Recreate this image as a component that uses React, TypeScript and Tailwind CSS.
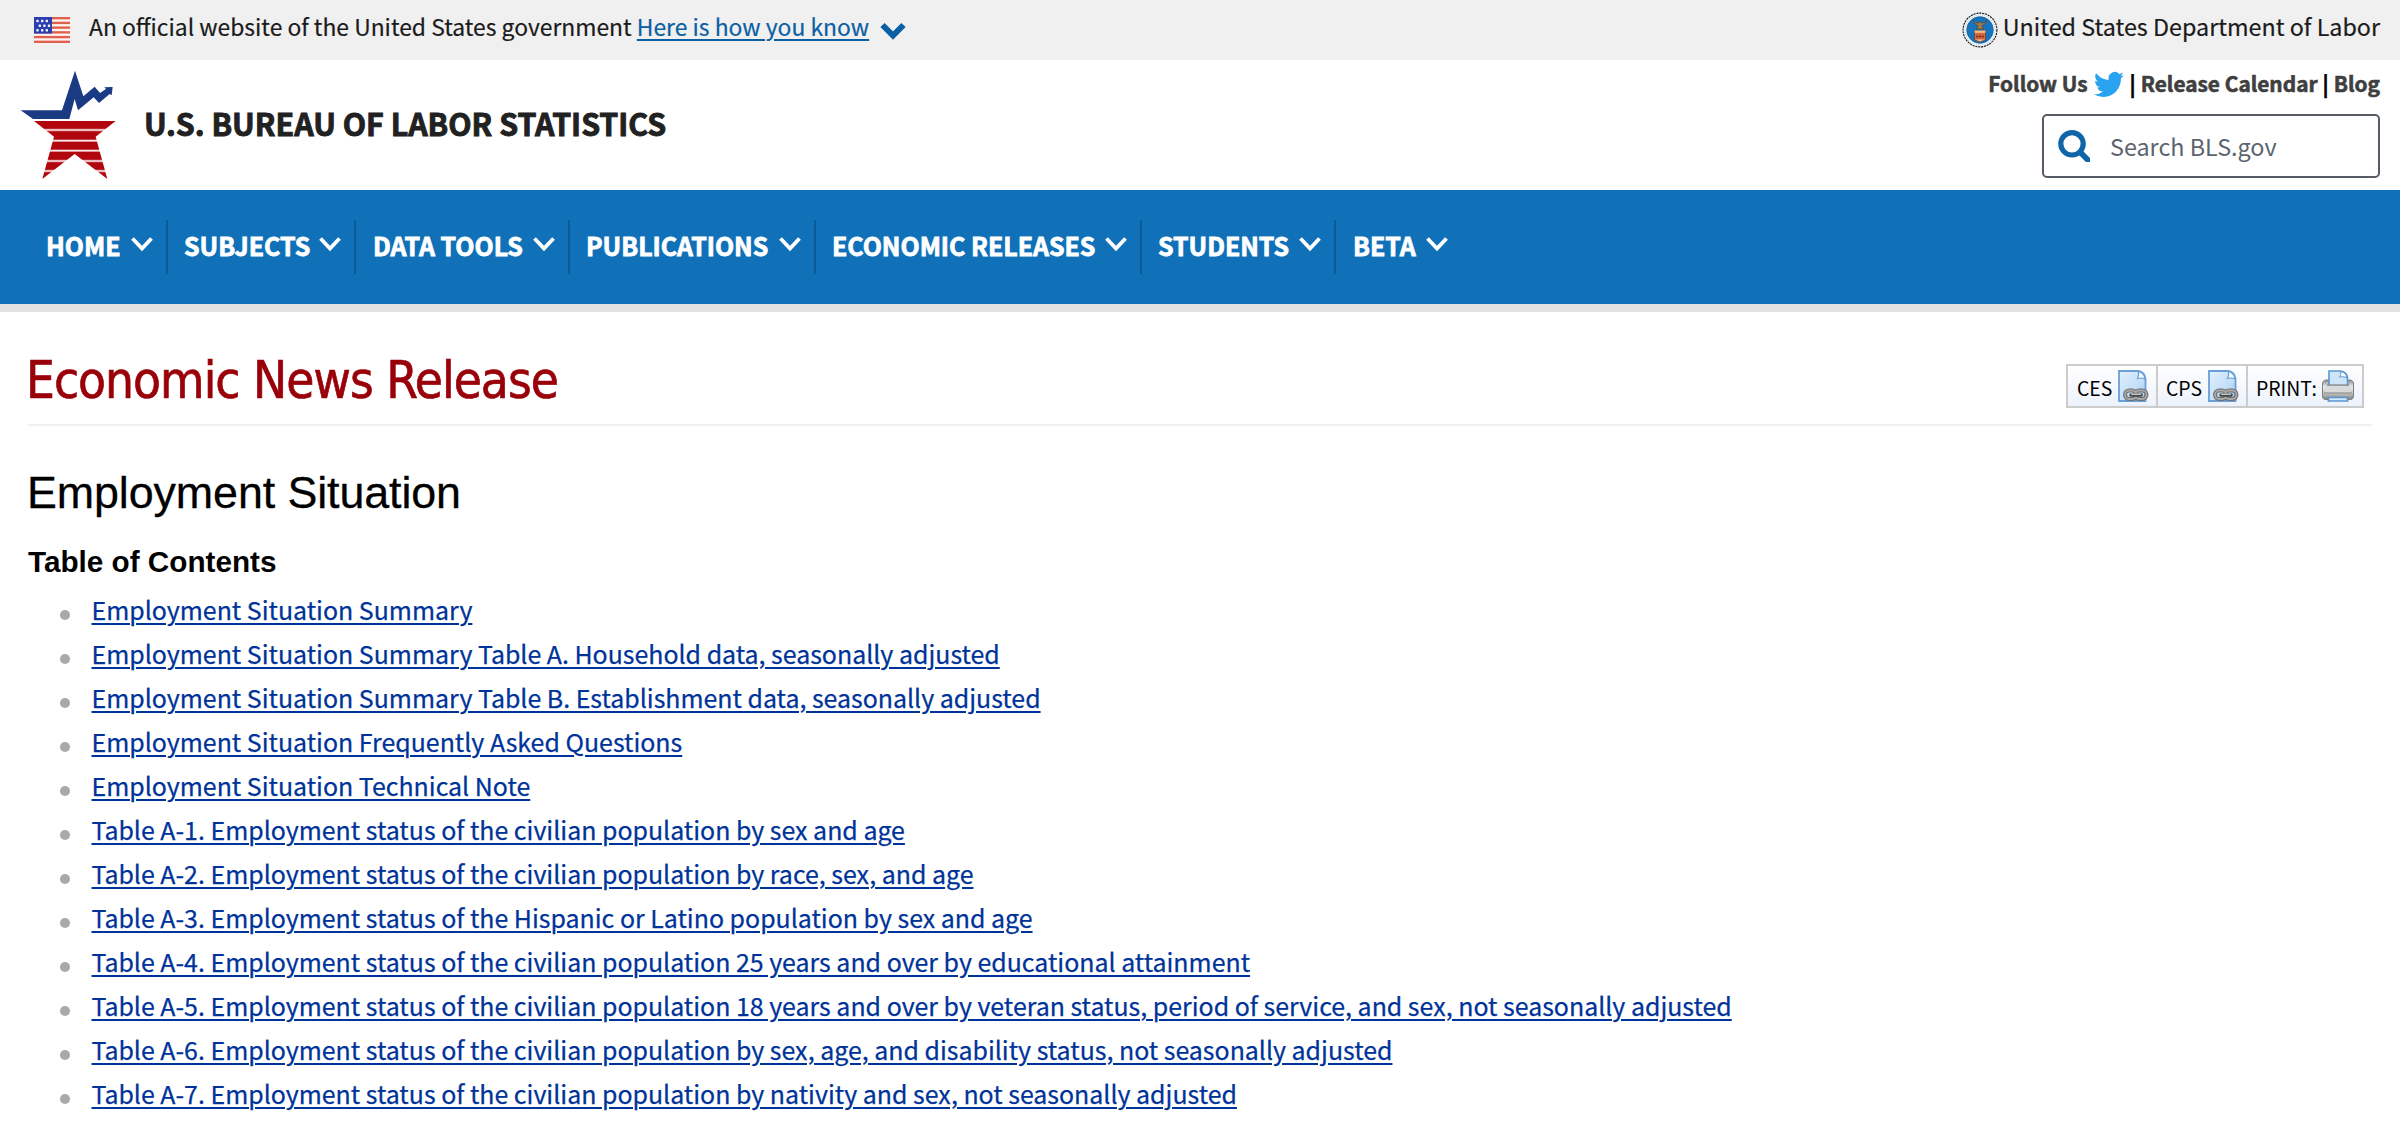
import React from 'react';

const SANS = "font-['Noto_Sans_CJK_SC',sans-serif]";

function Flag() {
  const rows = [0, 2, 4, 6, 8, 10];
  return (
    <svg width="36" height="26" viewBox="0 0 36 26" className="shrink-0">
      <rect width="36" height="26" fill="#fdf3f0" />
      {rows.map((r) => (
        <rect key={r} y={(r * 26) / 11} width="36" height={26 / 11} fill="#e0604d" />
      ))}
      <rect width="18" height="16.55" fill="#2a3eae" />
      {[
        [3.5, 4], [8.2, 4], [12.8, 4],
        [5.8, 8.7], [10.4, 8.7], [15, 8.7],
        [3.5, 13.3], [8.2, 13.3], [12.8, 13.3],
      ].map(([x, y], i) => (
        <rect key={i} x={x - 1.2} y={y - 1.2} width="2.4" height="2.4" rx="0.6" fill="#f0f2ff" />
      ))}
    </svg>
  );
}

function Seal() {
  return (
    <svg width="36" height="36" viewBox="0 0 36 36" className="shrink-0">
      <circle cx="18" cy="18" r="16.9" fill="#fff" stroke="#1b1b1b" strokeWidth="1.1" strokeDasharray="2.2 0.7" />
      <circle cx="18" cy="18" r="15.1" fill="none" stroke="#b9d3ea" strokeWidth="1.3" strokeDasharray="1.3 0.9" />
      <circle cx="18" cy="18" r="13.4" fill="#1474bd" stroke="#27527a" strokeWidth="0.5" />
      <path d="M11.500 8c.6 3.200 2.400 5 4.700 5.700l-1.700 3.300h7l-1.700-3.300c2.300-.7 4.100-2.500 4.700-5.700-1.500 2-3 3-4.800 3.200L18 9.500l-1.700 1.700C14.500 11 13 10 11.500 8z" fill="#a37c4c" stroke="#54402c" strokeWidth="0.7" />
      <path d="M12.500 18.500h11v9.300L18 30l-5.500-2.200z" fill="#df6a42" stroke="#5a3226" strokeWidth="0.6" />
      <path d="M12.500 18.500h11v2.300h-11z" fill="#ecc08e" />
      <path d="M14 24.500h8M15 22.500v4M18 22v4.500M21 22.500v4" stroke="#8a3424" strokeWidth="0.9" />
      <path d="M13 27.400h10L18 29.600z" fill="#ecc08e" />
    </svg>
  );
}

function StarLogo() {
  return (
    <svg width="120" height="130" viewBox="0 0 360 390" className="shrink-0">
      <path d="M32 151H156L195 32 220 109 254 80 270 99 288 87 283 82 308 81 305 106 299 102 267 129 251 112 204 151 194 117 178 177H69z" fill="#1b3a84" />
      <path d="M72 183H317L257 230 292 357 194 282 97 357 132 230z" fill="#b2060f" />
      {[210, 242, 272, 303, 333].map((y) => (
        <g key={y}>
          <rect x="60" y={y - 4} width="270" height="8" fill="#fff" opacity="0.4" />
          <rect x="60" y={y - 2} width="270" height="4" fill="#fff" opacity="0.85" />
        </g>
      ))}
    </svg>
  );
}

function Twitter() {
  return (
    <svg width="30" height="27" viewBox="0 1.5 24 21" preserveAspectRatio="none" className="shrink-0">
      <path
        fill="#29a3ef"
        d="M23.950 4.570a10 10 0 0 1-2.820.770 4.960 4.960 0 0 0 2.160-2.720c-.95.550-2 .960-3.130 1.180a4.920 4.920 0 0 0-8.380 4.480C7.690 8.090 4.070 6.130 1.640 3.160a4.920 4.920 0 0 0 1.520 6.570 4.900 4.900 0 0 1-2.230-.61v.06a4.920 4.920 0 0 0 3.950 4.830 5 5 0 0 1-2.210.080 4.940 4.940 0 0 0 4.600 3.420A9.870 9.870 0 0 1 0 19.540a14 14 0 0 0 7.550 2.210c9.050 0 14-7.500 14-13.980 0-.21 0-.42-.02-.63a9.940 9.940 0 0 0 2.420-2.570z"
      />
    </svg>
  );
}

function DocLink() {
  return (
    <svg width="32" height="32" viewBox="0 0 32 32" className="shrink-0">
      <defs>
        <linearGradient id="paper" x1="0" y1="0" x2="1" y2="1">
          <stop offset="0" stopColor="#e2f0fd" />
          <stop offset="0.6" stopColor="#c3dff8" />
          <stop offset="1" stopColor="#9cc6ee" />
        </linearGradient>
      </defs>
      <path d="M2 1h20c4 1 6 3.500 6.500 7.500V31H2z" fill="url(#paper)" stroke="#6a9fd8" strokeWidth="1.800" />
      <path d="M21.500 1.500c.5 3 0 5-1 7 2.500-.8 5-.6 7.500.5-.5-4-2.500-6.500-6.500-7.500z" fill="#f4faff" stroke="#6a9fd8" strokeWidth="1.200" />
      <rect x="8" y="20.500" width="11.500" height="8.500" rx="4.200" fill="none" stroke="#6f6f6f" strokeWidth="4" />
      <rect x="18" y="20.500" width="11.500" height="8.500" rx="4.200" fill="none" stroke="#6f6f6f" strokeWidth="4" />
      <rect x="8" y="20.500" width="11.500" height="8.500" rx="4.200" fill="none" stroke="#a8a8a8" strokeWidth="1.800" />
      <rect x="18" y="20.500" width="11.500" height="8.500" rx="4.200" fill="none" stroke="#a8a8a8" strokeWidth="1.800" />
      <path d="M14 25h10" stroke="#444" strokeWidth="3.600" strokeLinecap="round" />
      <path d="M14.500 24.300h9" stroke="#c9c9c9" strokeWidth="1.400" strokeLinecap="round" />
    </svg>
  );
}

function Printer() {
  return (
    <svg width="32" height="32" viewBox="0 0 32 32" className="shrink-0">
      <defs>
        <linearGradient id="body" x1="0" y1="0" x2="0" y2="1">
          <stop offset="0" stopColor="#8a8a8a" />
          <stop offset="0.350" stopColor="#eeeeee" />
          <stop offset="0.700" stopColor="#c0c0c0" />
          <stop offset="1" stopColor="#808080" />
        </linearGradient>
      </defs>
      <path d="M0.500 14c0-2.500 1.500-4 4-4h23c2.500 0 4 1.500 4 4v12c0 2-1 3.500-3 3.500H3.500c-2 0-3-1.500-3-3.500z" fill="url(#body)" stroke="#7d7d7d" strokeWidth="1" />
      <path d="M7 16V1h12c4 .8 6 3 6.500 6.500V16z" fill="#cde4fa" stroke="#5b96d3" strokeWidth="1.600" />
      <path d="M18.500 1.500c.5 2.500 0 4-1 5.500 2.500-.5 5-.3 7.500.8-.5-3.500-2.500-5.500-6.500-6.300z" fill="#f4faff" stroke="#5b96d3" strokeWidth="1" />
      <path d="M3 15.500h26v7.500H3z" fill="#dadada" />
      <path d="M5 15h22" stroke="#8b8b8b" strokeWidth="1.400" />
      <path d="M2 23h28" stroke="#8f8f8f" strokeWidth="1.200" />
      <path d="M7 27.500h18l.8 3.500H6.200z" fill="#d5e9fb" stroke="#5b96d3" strokeWidth="1.400" />
    </svg>
  );
}

const NAV = [
  { label: 'HOME', cls: 'w-[122px]' },
  { label: 'SUBJECTS', cls: 'w-[188px] pl-4' },
  { label: 'DATA TOOLS', cls: 'w-[214px] pl-[17px]' },
  { label: 'PUBLICATIONS', cls: 'w-[246px] pl-4' },
  { label: 'ECONOMIC RELEASES', cls: 'w-[326px] pl-4' },
  { label: 'STUDENTS', cls: 'w-[194px] pl-4' },
  { label: 'BETA', cls: 'w-[125px] pl-[17px]' },
];

const LINKS = [
  'Employment Situation Summary',
  'Employment Situation Summary Table A. Household data, seasonally adjusted',
  'Employment Situation Summary Table B. Establishment data, seasonally adjusted',
  'Employment Situation Frequently Asked Questions',
  'Employment Situation Technical Note',
  'Table A-1. Employment status of the civilian population by sex and age',
  'Table A-2. Employment status of the civilian population by race, sex, and age',
  'Table A-3. Employment status of the Hispanic or Latino population by sex and age',
  'Table A-4. Employment status of the civilian population 25 years and over by educational attainment',
  'Table A-5. Employment status of the civilian population 18 years and over by veteran status, period of service, and sex, not seasonally adjusted',
  'Table A-6. Employment status of the civilian population by sex, age, and disability status, not seasonally adjusted',
  'Table A-7. Employment status of the civilian population by nativity and sex, not seasonally adjusted',
];

export default function App() {
  return (
    <div className={`h-[1124px] w-full overflow-hidden whitespace-nowrap bg-white text-black ${SANS}`}>
      <div className="flex h-[60px] justify-between bg-[#f0f0f0] pl-[34px] pr-5 text-[#1b1b1b] [-webkit-text-stroke:0.2px]">
        <div className="flex items-start">
          <div className="pt-[17px]">
            <Flag />
          </div>
          <p className="ml-[19px] text-[22.880px] leading-[52px]">
            An official website of the United States government{' '}
            <a className="text-[#0b60a3] underline decoration-2 underline-offset-[3px]">Here is how you know</a>
          </p>
          <svg width="26" height="18" viewBox="0 0 26 18" className="ml-[11px] mt-[22px]">
            <path d="M2.500 3 13 13.500 23.500 3" fill="none" stroke="#0b60a3" strokeWidth="6" />
          </svg>
        </div>
        <div className="flex items-start">
          <div className="mr-[5px] pt-3">
            <Seal />
          </div>
          <span className="text-[23.320px] leading-[52px]">United States Department of Labor</span>
        </div>
      </div>

      <header className="flex h-[130px] justify-between pl-2.5 pr-5">
        <div className="flex">
          <StarLogo />
          <h2 className="ml-3.5 text-[30.350px] font-bold leading-[126px] text-[#212121] [-webkit-text-stroke:0.9px]">
            U.S. BUREAU OF LABOR STATISTICS
          </h2>
        </div>
        <div className="flex flex-col items-end">
          <div className="flex h-[46px] text-[20.850px] font-bold leading-[46px] text-[#3f3f3f] [-webkit-text-stroke:0.6px]">
            <span>Follow Us</span>
            <span className="ml-1.5 mt-[11px]">
              <Twitter />
            </span>
            <span className="ml-1.5 text-black">|</span>
            <span className="ml-[5px]">Release Calendar</span>
            <span className="ml-[5px] text-black">|</span>
            <span className="ml-[5px]">Blog</span>
          </div>
          <div className="mt-2 flex h-16 w-[338px] items-center rounded-[5px] border-2 border-[#565c65] pl-3.5">
            <svg width="32" height="32" viewBox="0 0 32 32">
              <circle cx="14" cy="13.800" r="11.200" fill="none" stroke="#0f65a8" strokeWidth="5.200" />
              <path d="M21.500 21.500 33 33" stroke="#0f65a8" strokeWidth="5.800" />
            </svg>
            <span className="ml-5 text-[23.350px] leading-[60px] text-[#5c6470]">Search BLS.gov</span>
          </div>
        </div>
      </header>

      <nav className="flex h-[122px] border-b-8 border-[#e1e1e1] bg-[#1071b9] pl-[46px] pt-[30px] text-[24.900px] font-bold leading-[50px] text-white [-webkit-text-stroke:0.8px]">
        {NAV.map((n, i) => (
          <div
            key={n.label}
            className={`flex h-[54px] justify-between pr-[13px] ${n.cls} ${i < NAV.length - 1 ? 'border-r-2 border-[#0b5c96]' : ''}`}
          >
            <span>{n.label}</span>
            <svg width="22" height="14" viewBox="0 0 22 14" className="mt-[17px] shrink-0">
              <path d="M1.500 1.500 11 11.500 20.500 1.500" fill="none" stroke="#fff" strokeWidth="3.800" />
            </svg>
          </div>
        ))}
      </nav>

      <main className="pl-7 pr-7">
        <div className="flex h-[114px] justify-between border-b-2 border-[#f1f1f1] pr-2">
          <h1 className="-ml-[2px] mt-[37px] font-['DejaVu_Sans_Condensed','DejaVu_Sans',sans-serif] text-[50.800px] leading-[64px] tracking-[-0.960px] text-[#990009] [-webkit-text-stroke:0.7px]">
            Economic News Release
          </h1>
          <div className="mt-[52px] flex h-11 w-[298px] border-2 border-[#ccc] bg-linear-to-b from-white to-[#ecf2fc] text-[19.400px] leading-[43px]">
            <div className="flex w-[90px] border-r-2 border-[#ccc] pl-[9px]">
              <span className="w-10">CES</span>
              <span className="mt-1">
                <DocLink />
              </span>
            </div>
            <div className="flex w-[90px] border-r-2 border-[#ccc] pl-2">
              <span className="w-[41px]">CPS</span>
              <span className="mt-1">
                <DocLink />
              </span>
            </div>
            <div className="flex pl-2">
              <span className="w-[66px]">PRINT:</span>
              <span className="mt-1">
                <Printer />
              </span>
            </div>
          </div>
        </div>

        <h2 className="-ml-px mt-9 font-['Liberation_Sans',sans-serif] text-[44.800px] leading-[60px] tracking-[-0.090px] [-webkit-text-stroke:0.3px]">
          Employment Situation
        </h2>
        <h3 className="mt-5 font-['Liberation_Sans',sans-serif] text-[29.700px] font-bold leading-[40px]">
          Table of Contents
        </h3>
        <ul className="mt-[5px] pl-8">
          {LINKS.map((l) => (
            <li key={l} className="flex h-11 text-[24.930px] leading-[44px]">
              <span className="mt-[23px] size-2.5 rounded-full bg-[#a9a9a9]" />
              <a className="ml-[21.500px] text-[#003399] underline decoration-2 underline-offset-[3px] [-webkit-text-stroke:0.25px]">{l}</a>
            </li>
          ))}
        </ul>
      </main>
    </div>
  );
}
